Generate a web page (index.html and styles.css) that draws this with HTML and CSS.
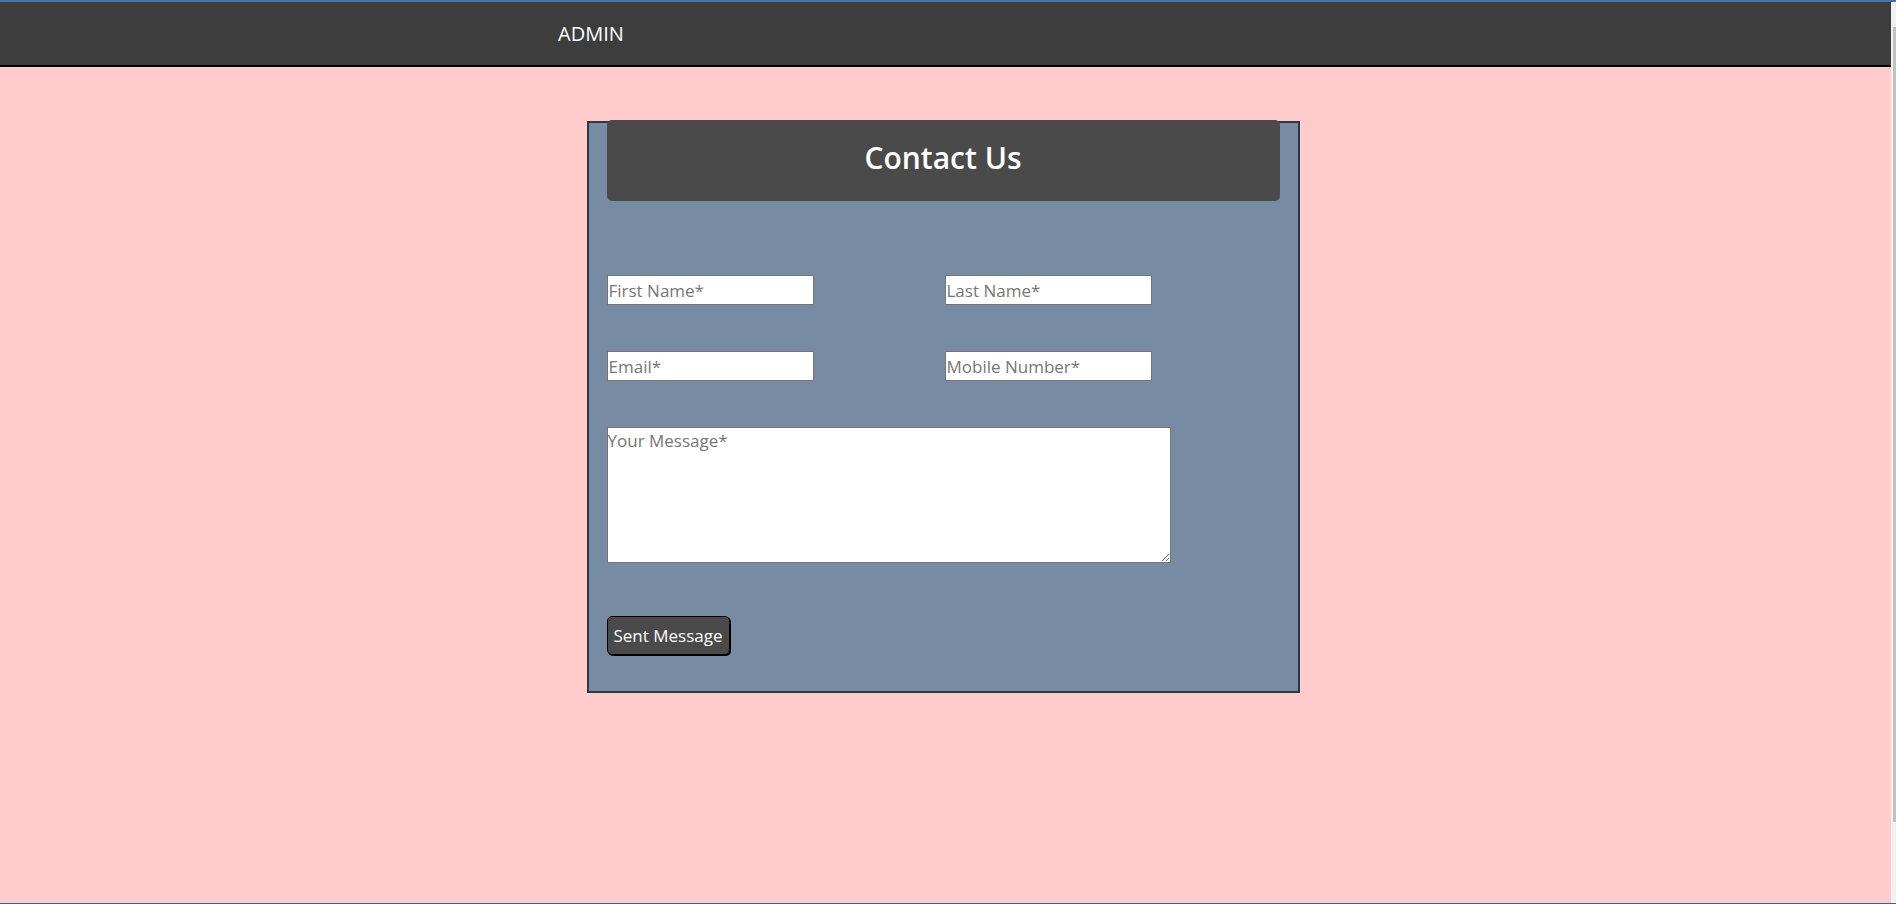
FILE: index.html
```html
<!DOCTYPE html>
<html lang="en">
<head>
<meta charset="utf-8">
<title>Contact Us</title>
<link rel="stylesheet" href="styles.css">
</head>
<body>
  <div class="frame-line top"></div>
  <div class="window">
    <div class="page">
      <nav class="navbar">
        <a class="brand" href="#">ADMIN</a>
      </nav>
      <main class="main">
        <section class="card">
          <header class="card-head">
            <h2 class="card-title">Contact Us</h2>
          </header>
          <form class="contact-form">
            <div class="form-grid">
              <input class="field" type="text" placeholder="First Name*">
              <input class="field" type="text" placeholder="Last Name*">
              <input class="field" type="email" placeholder="Email*">
              <input class="field" type="tel" placeholder="Mobile Number*">
            </div>
            <textarea class="message" placeholder="Your Message*"></textarea>
            <button class="send-btn" type="button">Sent Message</button>
          </form>
        </section>
      </main>
    </div>
    <div class="scrollbar"><div class="thumb"></div></div>
  </div>
  <div class="frame-line bottom"></div>
</body>
</html>
```

FILE: styles.css
```css
* { box-sizing: border-box; }

html, body {
  margin: 0;
  height: 100%;
}

body {
  display: flex;
  flex-direction: column;
  overflow: hidden;
  font-family: "Open Sans", "Noto Sans", sans-serif;
  background: #ffcccb;
}

.frame-line {
  background: #4a74a8;
  flex: none;
}
.frame-line.top { height: 2px; }
.frame-line.bottom { height: 1px; background: #3f5f8c; }

.window {
  flex: 1;
  display: flex;
  min-height: 0;
}

.page {
  flex: 1;
  background: #ffcccb;
  min-width: 0;
}

.scrollbar {
  width: 5px;
  background: #f1f1f1;
  padding-top: 25px;
  padding-left: 2px;
}
.thumb {
  width: 3px;
  height: 795px;
  background: #c1c1c1;
}

.navbar {
  height: 65px;
  background: #3d3d3d;
  border-bottom: 2px solid #000;
  display: flex;
  align-items: center;
  padding-left: 558px;
}

.brand {
  color: #fff;
  text-decoration: none;
  font-size: 20px;
  line-height: 1;
}

.main {
  padding-top: 54px;
}

.card {
  width: 713px;
  margin-left: calc(50% - 359px);
  background: #778ba3;
  border: 2px solid #2b3848;
  padding: 0 18px 36px;
}

.card-head {
  margin-top: -3px;
  height: 81px;
  padding-bottom: 5px;
  background: #4a4a4a;
  border-radius: 5px;
  display: flex;
  align-items: center;
  justify-content: center;
}

.card-title {
  margin: 0;
  color: #fff;
  font-size: 30px;
  font-weight: 600;
  line-height: 1;
}

.contact-form {
  padding-top: 74px;
  display: flex;
  flex-direction: column;
  align-items: flex-start;
}

.form-grid {
  width: 100%;
  display: grid;
  grid-template-columns: 1fr 1fr;
  column-gap: 3px;
  row-gap: 46px;
}

.field {
  width: 207px;
  height: 30px;
  border: 1px solid #767676;
  background: #fff;
  padding: 0 1px;
  font-family: inherit;
  font-size: 17px;
  color: #333;
}

.field::placeholder,
.message::placeholder {
  color: #767676;
}

.message {
  margin-top: 46px;
  width: 564px;
  height: 136px;
  border: 1px solid #767676;
  padding: 1px 0 0 0;
  font-family: inherit;
  font-size: 17px;
  resize: both;
}

.send-btn {
  margin-top: 53px;
  width: 123px;
  height: 39px;
  background: #4a4a4a;
  color: #fff;
  border: 1px solid #000;
  box-shadow: 1px 1px 0 #000;
  border-radius: 5px;
  font-family: inherit;
  font-size: 17px;
  padding: 0;
}
```
